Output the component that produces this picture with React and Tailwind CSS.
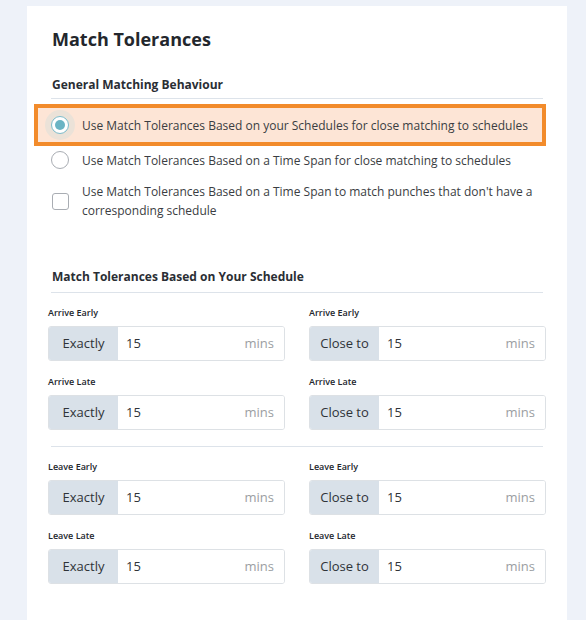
import React from 'react';

const Radio = ({ checked }) => (
  <span className={checked ? 'flex h-[30px] w-[30px] shrink-0 items-center justify-center rounded-full bg-[#ebe2d8]' : 'flex h-[30px] w-[30px] shrink-0 items-center justify-center rounded-full'}>
    <span className={checked ? 'flex h-[18px] w-[18px] items-center justify-center rounded-full border border-[#7dbccb] bg-white' : 'flex h-[18px] w-[18px] items-center justify-center rounded-full border border-[#a9adb3] bg-white'}>
      {checked && <span className="h-[10px] w-[10px] rounded-full bg-[#6bb4c4]" />}
    </span>
  </span>
);

const Field = ({ label, mode }) => (
  <div>
    <div className="text-[9px] font-semibold leading-[12px] text-[#23272d]">{label}</div>
    <div className="mt-[7px] flex h-[35px] overflow-hidden rounded-[3px] border border-[#dde1e5]">
      <div className="flex w-[69px] shrink-0 items-center justify-center bg-[#d9e1e9] text-[13px] text-[#2f3338]">{mode}</div>
      <div className="flex flex-1 items-center justify-between bg-white pl-[8px] pr-[10px] text-[13px]">
        <span className="text-[#2f3338]">15</span>
        <span className="text-[#9b9ea2]">mins</span>
      </div>
    </div>
  </div>
);

const App = () => {
  return (
    <div className="min-h-screen bg-[#eef2f9] pl-[27px] pt-[6px]" style={{ fontFamily: '"Open Sans", "Liberation Sans", sans-serif' }}>
      <div className="w-[540px] bg-white px-[21px] pb-[40px] pt-[19px]">
        <h1 className="pl-[4px] text-[18px] font-bold leading-[28px] text-[#23272d]">Match Tolerances</h1>

        <h2 className="mt-[22px] pl-[4px] text-[12px] font-bold leading-[20px] text-[#2a2e34]">General Matching Behaviour</h2>
        <div className="mx-[3px] mt-[3px] h-px bg-[#dde3ea]" />

        {/* matching options */}
        <div className="ml-[-14px] mt-[5px] w-[512px] text-[12px] text-[#3a3d42]">
          <div className="flex h-[42px] items-center gap-[7px] border-4 border-[#f28b2b] bg-[#fde5d6] pl-[7px]">
            <Radio checked />
            <span className="leading-[19px]">Use Match Tolerances Based on your Schedules for close matching to schedules</span>
          </div>
          <div className="flex h-[28px] items-center gap-[7px] pl-[11px]">
            <Radio />
            <span className="leading-[19px]">Use Match Tolerances Based on a Time Span for close matching to schedules</span>
          </div>
          <div className="mt-[8px] flex items-center gap-[7px] pl-[11px]">
            <span className="flex w-[30px] shrink-0 justify-center">
              <span className="h-[17px] w-[17px] rounded-[3px] border border-[#a9adb3] bg-white" />
            </span>
            <span className="leading-[19px]">
              Use Match Tolerances Based on a Time Span to match punches that don't have a
              <br />
              corresponding schedule
            </span>
          </div>
        </div>

        <h2 className="mt-[47px] pl-[4px] text-[12px] font-bold leading-[20px] text-[#2a2e34]">Match Tolerances Based on Your Schedule</h2>
        <div className="mx-[3px] mt-[5px] h-px bg-[#dde3ea]" />

        <div className="mt-[14px] grid grid-cols-2 gap-x-[24px] gap-y-[15px]">
          <Field label="Arrive Early" mode="Exactly" />
          <Field label="Arrive Early" mode="Close to" />
          <Field label="Arrive Late" mode="Exactly" />
          <Field label="Arrive Late" mode="Close to" />
        </div>

        <div className="mx-[3px] mt-[16px] h-px bg-[#dde3ea]" />

        <div className="mt-[14px] grid grid-cols-2 gap-x-[24px] gap-y-[15px]">
          <Field label="Leave Early" mode="Exactly" />
          <Field label="Leave Early" mode="Close to" />
          <Field label="Leave Late" mode="Exactly" />
          <Field label="Leave Late" mode="Close to" />
        </div>
      </div>
    </div>
  );
};

export default App;
